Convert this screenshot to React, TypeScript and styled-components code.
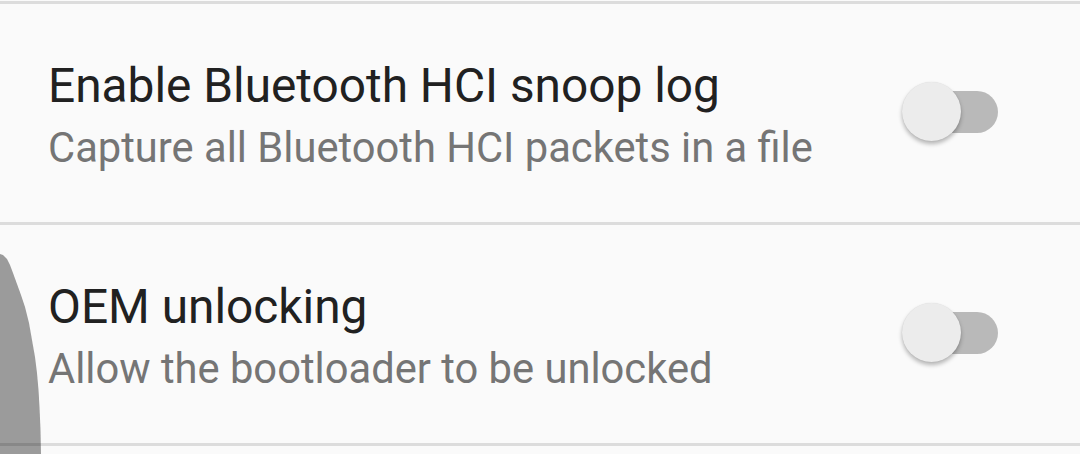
import React from "react";
import styled, { createGlobalStyle } from "styled-components";

const GlobalStyle = createGlobalStyle`
  html, body {
    margin: 0;
    padding: 0;
    background: #fafafa;
  }
  body {
    font-family: Roboto, "Noto Sans", sans-serif;
    -webkit-font-smoothing: antialiased;
  }
`;

const Screen = styled.div`
  position: relative;
  width: 1080px;
  height: 454px;
  overflow: hidden;
  background: #fafafa;
  padding-top: 1px;
  box-sizing: border-box;
`;

const Divider = styled.div`
  height: 3px;
  background: #dcdcdc;
`;

const Row = styled.div`
  height: 218px;
  display: flex;
  align-items: flex-start;
  justify-content: space-between;
  padding: 0 82px 0 48px;
  box-sizing: border-box;
`;

const TextBlock = styled.div`
  display: flex;
  flex-direction: column;
  padding-top: 52px;
`;

const Title = styled.div`
  font-size: 47.8px;
  line-height: 60px;
  color: #212121;
`;

const Summary = styled.div`
  font-size: 41.7px;
  line-height: 64px;
  color: #757575;
`;

const SwitchBox = styled.div`
  position: relative;
  width: 96px;
  height: 60px;
  margin-top: 78px;
  flex-shrink: 0;
`;

const Track = styled.div`
  position: absolute;
  right: 0;
  top: 9px;
  width: 90px;
  height: 42px;
  border-radius: 21px;
  background: #b9b9b9;
`;

const Thumb = styled.div`
  position: absolute;
  left: 0;
  top: 0;
  width: 59px;
  height: 59px;
  border-radius: 50%;
  background: #ececec;
  box-shadow: 0 3px 4px rgba(0, 0, 0, 0.28), 0 0 1px rgba(0, 0, 0, 0.12);
`;

// overscroll/edge glow drawn over the list on the left side
const EdgeGlow = styled.svg`
  position: absolute;
  left: 0;
  top: 254px;
  pointer-events: none;
`;

type SettingProps = {
  title: string;
  summary: string;
};

const SwitchSetting: React.FC<SettingProps> = ({ title, summary }) => (
  <Row>
    <TextBlock>
      <Title>{title}</Title>
      <Summary>{summary}</Summary>
    </TextBlock>
    <SwitchBox>
      <Track />
      <Thumb />
    </SwitchBox>
  </Row>
);

const glowPath =
  "M0 0 L3 1 L7 5 L10 11 L13 19 L17 30 L21 41 L25 53 L29 69 L32 86 L35 103 L37 119 L38.5 136 L39.5 153 L40.5 176 L41 200 L0 200 Z";

export default function App() {
  return (
    <>
      <GlobalStyle />
      <Screen>
        <Divider />
        <SwitchSetting
          title="Enable Bluetooth HCI snoop log"
          summary="Capture all Bluetooth HCI packets in a file"
        />
        <Divider />
        <SwitchSetting
          title="OEM unlocking"
          summary="Allow the bootloader to be unlocked"
        />
        <Divider />
        <EdgeGlow width="44" height="200" viewBox="0 0 44 200">
          <path d={glowPath} fill="rgba(0,0,0,0.38)" />
        </EdgeGlow>
      </Screen>
    </>
  );
}
